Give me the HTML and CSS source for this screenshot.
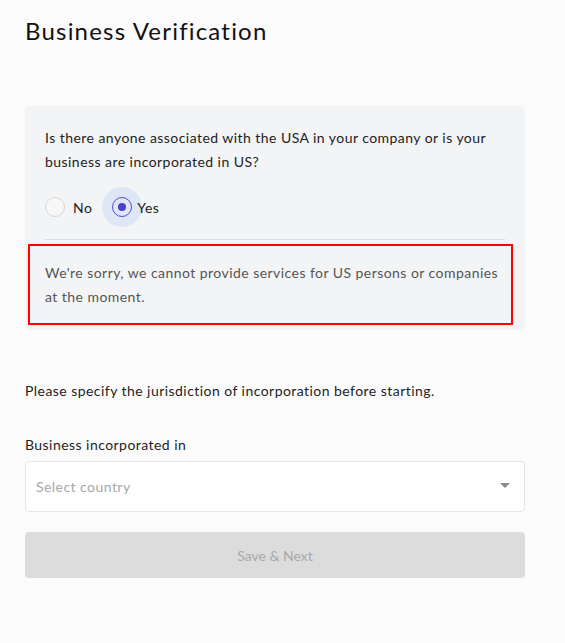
FILE: index.html
```html
<!DOCTYPE html>
<html>
<head>
<meta charset="utf-8">
<link rel="stylesheet" href="styles.css">
</head>
<body>
<main class="page">
  <h1 class="title">Business Verification</h1>
  <section class="card">
    <p class="question">Is there anyone associated with the USA in your company or is your business are incorporated in US?</p>
    <div class="radios">
      <label class="radio">
        <span class="circle"></span>
        <span class="radio-label">No</span>
      </label>
      <label class="radio checked">
        <span class="halo"><span class="circle"><span class="dot"></span></span></span>
        <span class="radio-label">Yes</span>
      </label>
    </div>
    <hr class="divider">
    <div class="notice">We're sorry, we cannot provide services for US persons or companies at the moment.</div>
  </section>
  <p class="hint">Please specify the jurisdiction of incorporation before starting.</p>
  <label class="field-label">Business incorporated in</label>
  <div class="select">
    <span class="placeholder">Select country</span>
    <span class="caret"></span>
  </div>
  <button class="btn" disabled>Save &amp; Next</button>
</main>
</body>
</html>
```
FILE: styles.css
```css
html, body {
  margin: 0;
  padding: 0;
  background: #fbfbfb;
}
body {
  font-family: Lato, "Open Sans", sans-serif;
  color: #1e1e1e;
  letter-spacing: 0.45px;
}
.page {
  padding: 15px 40px 0 25px;
  width: 500px;
}
.title {
  margin: 0;
  font-weight: 400;
  font-size: 24px;
  line-height: 32px;
  letter-spacing: 1.2px;
  color: #111;
}
.card {
  margin-top: 59px;
  background: #f3f4f6;
  border-radius: 5px;
  padding: 20px 20px 5px 20px;
}
.question {
  margin: 0;
  font-size: 14px;
  line-height: 24px;
  color: #222;
}
.radios {
  display: flex;
  align-items: center;
  margin-top: 13px;
  height: 40px;
}
.radio {
  display: flex;
  align-items: center;
  font-size: 14px;
  color: #222;
}
.circle {
  box-sizing: border-box;
  width: 20px;
  height: 20px;
  border-radius: 50%;
  border: 1px solid #d6d6d6;
  background: #f7f7f7;
  display: flex;
  align-items: center;
  justify-content: center;
}
.radio-label {
  margin-left: 8px;
}
.radio.checked {
  margin-left: 10px;
}
.radio.checked .radio-label {
  margin-left: -5px;
}
.halo {
  width: 40px;
  height: 40px;
  border-radius: 50%;
  background: #dde7f5;
  display: flex;
  align-items: center;
  justify-content: center;
}
.radio.checked .circle {
  border: 1.5px solid #574cd0;
  background: transparent;
}
.dot {
  width: 8px;
  height: 8px;
  border-radius: 50%;
  background: #4a40c9;
}
.divider {
  margin: 12px 0 0 0;
  border: 0;
  border-top: 1px solid #dcdcdc;
}
.notice {
  margin: 4px -8px 0 -17px;
  border: 2px solid #ff0000;
  padding: 15px 2px 14px 15px;
  font-size: 14px;
  line-height: 24px;
  color: #555;
}
.hint {
  margin: 49px 0 0 0;
  font-size: 14px;
  line-height: 24px;
  color: #1e1e1e;
}
.field-label {
  display: block;
  margin-top: 32px;
  font-size: 14px;
  line-height: 20px;
  color: #1e1e1e;
}
.select {
  margin-top: 6px;
  box-sizing: border-box;
  height: 51px;
  background: #fff;
  border: 1px solid #e6e6e6;
  border-radius: 4px;
  display: flex;
  align-items: center;
  justify-content: space-between;
  padding: 0 14px 0 10px;
}
.placeholder {
  font-size: 14px;
  color: #a8a8a8;
}
.caret {
  width: 0;
  height: 0;
  border-left: 5px solid transparent;
  border-right: 5px solid transparent;
  border-top: 5px solid #8a8a8a;
  margin-top: -2px;
}
.btn {
  display: block;
  margin-top: 20px;
  width: 100%;
  height: 46px;
  border: 0;
  border-radius: 4px;
  background: #dcdcdc;
  color: #a9a9a9;
  font-family: Lato, sans-serif;
  font-size: 14px;
  letter-spacing: 0;
}
```
